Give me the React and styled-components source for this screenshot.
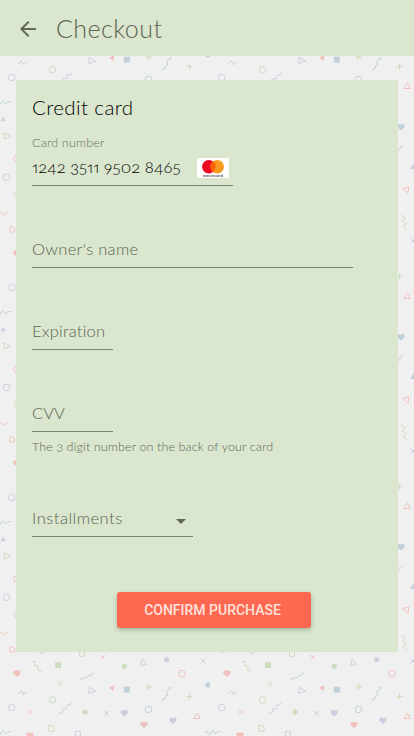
import React from "react";
import styled, { createGlobalStyle } from "styled-components";

const GlobalStyle = createGlobalStyle`
  * { box-sizing: border-box; }
  html, body { margin: 0; background: #f0f0f0; overflow: hidden; }
  body {
    font-family: "Lato", "Open Sans", sans-serif;
    font-weight: 300;
    font-variant-numeric: oldstyle-nums proportional-nums;
  }
`;

const Page = styled.div`
  position: relative;
  width: 100%;
  height: 736px;
  overflow: hidden;
  isolation: isolate;
`;

const Backdrop = styled.svg`
  position: absolute;
  inset: 0;
  width: 100%;
  height: 100%;
  z-index: -1;
`;

const AppBar = styled.header`
  display: flex;
  align-items: center;
  gap: 16px;
  height: 56px;
  padding: 2px 16px 0;
  background: #dae6ce;
`;

const BackButton = styled.button`
  display: flex;
  width: 24px;
  height: 24px;
  padding: 0;
  border: 0;
  background: none;
  color: #616759;
`;

const PageTitle = styled.h1`
  margin: -2px 0 0;
  color: #5c6455;
  font-size: 25px;
  font-weight: 300;
  line-height: 32px;
  letter-spacing: 0.45px;
`;

const Card = styled.main`
  display: flex;
  flex-direction: column;
  align-items: flex-start;
  width: 382px;
  height: 572px;
  margin: 24px 16px 0;
  padding: 15px 16px 16px;
  background: #dae6ce;
`;

const CardTitle = styled.h2`
  margin: 0;
  color: #000;
  font-size: 20.5px;
  font-weight: 300;
  line-height: 24px;
  letter-spacing: 0.4px;
`;

const Field = styled.div`
  display: flex;
  align-items: center;
  justify-content: space-between;
  width: ${(p) => p.$width}px;
  height: 36px;
  margin-top: ${(p) => p.$gap}px;
  padding-bottom: 2px;
  border-bottom: 1px solid #79836f;
  color: ${(p) => (p.$filled ? "#000" : "#5c6455")};
  font-size: 16.5px;
  line-height: 20px;
  letter-spacing: ${(p) => p.$tracking || 0}px;
  white-space: nowrap;
`;

const FloatingLabel = styled.label`
  height: 16px;
  margin-top: 16px;
  color: #697260;
  font-size: 12.5px;
  line-height: 16px;
  letter-spacing: 0.2px;
`;

const Hint = styled.p`
  height: 16px;
  margin: 7px 0 0;
  color: #5f6758;
  font-size: 12.5px;
  line-height: 16px;
  letter-spacing: 0.12px;
`;

const BrandMark = styled.svg`
  width: 32px;
  height: 20px;
  margin: 2px 4px 0 0;
`;

const Caret = styled.svg`
  width: 10px;
  height: 5px;
  margin: 7px 7px 0 0;
`;

const ConfirmButton = styled.button`
  align-self: center;
  width: 194px;
  height: 36px;
  margin: 55px 0 0 13px;
  padding: 0 2px 0 0;
  border: 0;
  border-radius: 3px;
  background: #ff6850;
  box-shadow: 0 2px 4px rgba(50, 60, 40, 0.3);
  color: #ffe2dc;
  font: 500 14px/36px Roboto, sans-serif;
  letter-spacing: 0;
`;

const BLUE = "#b9ccd6";
const PURPLE = "#cbc9dc";
const GREEN = "#c9d9b9";
const RED = "#f0bcb7";

const rings = [
  [42.3, 20.3, PURPLE], [52.5, 69.8, GREEN], [11.7, 77.5, PURPLE], [182, 43.6, RED],
  [148.5, 79.5, BLUE], [17, 159, RED], [6.5, 177.3, PURPLE], [17.5, 194.5, GREEN],
];
const dots = [
  [124.3, 36.2, GREEN], [85, 82, GREEN], [166.7, 29.5, PURPLE], [208, 54.8, BLUE],
];
const crosses = [
  [102.7, 27, RED], [60.2, 53.5, GREEN], [30.7, 82, RED], [106.5, 83.3, BLUE],
  [203, 31, PURPLE],
];
const hearts = [
  [17, 43.5, RED], [124.3, 83, PURPLE], [30, 105.5, RED], [173, 90.5, PURPLE],
  [144, 94.7, RED], [191, 127, BLUE],
];
const strokes = [
  ["M10 16.5v5.5h4.7v-3q-.5-2.5-4.7-2.5z", RED],
  ["M49 95.3v6h4.5q2-3-.2-5-1.5-1-4.3-1z", GREEN],
  ["M79.6 21.5h4.8v4.8h-4.8z", GREEN],
  ["M75.3 101.3h5v5h-5z", PURPLE],
  ["M32 31.5h3.3l-.8 4 3.5.5v4.7l3.8.5", GREEN],
  ["M80 49.2q1-1.3 2.2-.3t2.2-1q.5-1.5 1.8-.5t2-1q.5-2 1.7-1t2-.8q.5-2 2.1-1.6", BLUE],
  ["M18.3 63.7l3-2.8 2.4 3.8 3.4-3.3", BLUE],
  ["M59.3 84.5q0-2.3 1.7-1.8t1.8-1.5-.2-2.2 2.4-.3 1.8-1.4 0-2.1 2-.1 1.8-1.2.8-.4", PURPLE],
  ["M162.3 70.5q0-2 1.6-1.6t1.5-1.8 1.1-1.6 1-1.4-.8-2.4 1.9-1.5 1-1.8 2.3-.6", BLUE],
  ["M-5 103q1.5-4 3 0t3 0 3-1.2 2.5 1.2 4.3-1.7M205 103q1.5-4 3 0t3 0", BLUE],
  ["M0 3.3l1-.9 3.2 3 3.4-3.4", RED],
  ["M191 5l4.3 3-3 2.7 4.3 3-3.5 3 3.7 3", GREEN],
  ["M187 150q3 1 3-1t-.1-1.8 2-.8.7-1.5", PURPLE],
  ["M89.3 57.3l6.3 3.8-6.8 2.5zM140.5 35.5l1.7-6.5 4.4 5.6z", PURPLE],
  ["M193.7 88.5l3.6-5.4 3 5.4zM192.6 188.5l6.3-1.5-1 6z", RED],
  ["M3.8 132.8l6.5 3.1-5.7 3.3z", GREEN],
  ["M146 56l6 1.5M147 60l2.5-6M150.5 59.5l-4-4M186.5 66.5h6M189.5 63.5v6", GREEN],
];
const solids = [
  ["M55.2 32.2h5.8v5.8h-5.8z", GREEN],
  ["M123.8 56.6h6v6h-6z", BLUE],
  ["M109 57.5l5.3-2-.8 5.7z", RED],
  ["M.5 121.3l2.7-4.7 2.5 4.7z", PURPLE],
  ["M200 169l4-6 4 6z", BLUE],
  ["M13 42.5l4-3v6z", RED],
];

function ConfettiTile() {
  return (
    <g fill="none" strokeWidth="1" opacity="0.9">
      {rings.map(([x, y, c]) => <circle key={`${x}-${y}`} cx={x} cy={y} r="3.3" stroke={c} />)}
      {dots.map(([x, y, c]) => <circle key={`${x}-${y}`} cx={x} cy={y} r="2.6" fill={c} />)}
      {crosses.map(([x, y, c]) => (
        <path key={`${x}-${y}`} d={`M${x - 2.3} ${y - 2.3}l4.6 4.6m0-4.6l-4.6 4.6`} stroke={c} />
      ))}
      {hearts.map(([x, y, c]) => (
        <path key={`${x}-${y}`} d={`M${x} ${y + 3.4}l-3.3-3q-1-3.4 1.5-3.4 1.3 0 1.8.7.5-.7 1.8-.7 2.5 0 1.5 3.4z`} fill={c} />
      ))}
      {strokes.map(([d, c]) => <path key={d} d={d} stroke={c} />)}
      {solids.map(([d, c]) => <path key={d} d={d} fill={c} />)}
    </g>
  );
}

function Confetti() {
  return (
    <Backdrop aria-hidden="true">
      <defs>
        <pattern id="confetti" width="210" height="210" patternUnits="userSpaceOnUse">
          <ConfettiTile />
        </pattern>
      </defs>
      <rect width="100%" height="100%" fill="#f0f0f0" />
      <rect width="100%" height="100%" fill="url(#confetti)" />
    </Backdrop>
  );
}

function Mastercard() {
  return (
    <BrandMark viewBox="0 0 32 20" role="img" aria-label="mastercard">
      <rect width="32" height="20" rx="1.5" fill="#fff" />
      <circle cx="11.8" cy="8.7" r="6.8" fill="#eb0923" />
      <circle cx="20.2" cy="8.7" r="6.8" fill="#f79b1d" />
      <path d="M16 3.35a6.8 6.8 0 0 1 0 10.7 6.8 6.8 0 0 1 0-10.7z" fill="#ff5f08" />
      <text x="6" y="18.5" textLength="20" fontFamily="Liberation Sans, sans-serif" fontWeight="700" fontSize="3.6" letterSpacing="0" fill="#555">mastercard</text>
    </BrandMark>
  );
}

export default function App() {
  return (
    <Page>
      <GlobalStyle />
      <Confetti />
      <AppBar>
        <BackButton aria-label="Back">
          <svg width="24" height="24" viewBox="0 0 24 24" fill="currentColor">
            <path d="M20 11H7.83l5.59-5.59L12 4l-8 8 8 8 1.41-1.41L7.83 13H20v-2z" />
          </svg>
        </BackButton>
        <PageTitle>Checkout</PageTitle>
      </AppBar>
      <Card>
        <CardTitle>Credit card</CardTitle>
        <FloatingLabel>Card number</FloatingLabel>
        <Field $width={201} $gap={-1} $tracking={0.1} $filled>
          1242 3511 9502 8465
          <Mastercard />
        </Field>
        <Field $width={321} $gap={46} $tracking={0.3}>Owner's name</Field>
        <Field $width={81} $gap={46} $tracking={0.2}>Expiration</Field>
        <Field $width={81} $gap={46} $tracking={0}>CVV</Field>
        <Hint>The 3 digit number on the back of your card</Hint>
        <Field $width={161} $gap={46} $tracking={0.5}>
          Installments
          <Caret viewBox="0 0 10 5" fill="#616759"><path d="M0 0h10L5 5z" /></Caret>
        </Field>
        <ConfirmButton>CONFIRM PURCHASE</ConfirmButton>
      </Card>
    </Page>
  );
}
